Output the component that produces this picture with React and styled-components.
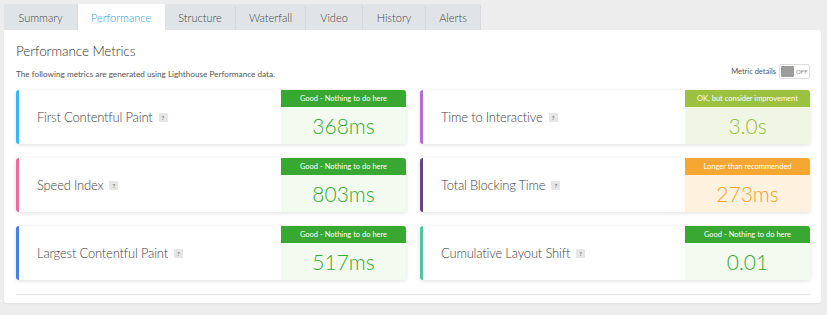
import React from 'react';
import styled, { createGlobalStyle } from 'styled-components';

const GlobalStyle = createGlobalStyle`
  body {
    margin: 0;
    background: #ededed;
    font-family: Lato, 'Open Sans', 'Liberation Sans', sans-serif;
  }
`;

const tabs = [
  { label: 'Summary', width: 74 },
  { label: 'Performance', width: 87 },
  { label: 'Structure', width: 71 },
  { label: 'Waterfall', width: 70 },
  { label: 'Video', width: 57 },
  { label: 'History', width: 63 },
  { label: 'Alerts', width: 55 },
];

const grades = {
  good: { head: '#38a832', body: '#f3faf0', text: '#36a830', label: 'Good - Nothing to do here' },
  ok: { head: '#9cc03f', body: '#f1f5e4', text: '#92bd38', label: 'OK, but consider improvement' },
  bad: { head: '#f5a732', body: '#fef1dd', text: '#f4a12a', label: 'Longer than recommended' },
};

const metrics = [
  { name: 'First Contentful Paint', value: '368ms', grade: 'good', accent: '#3bb9ef' },
  { name: 'Time to Interactive', value: '3.0s', grade: 'ok', accent: '#b26ed3' },
  { name: 'Speed Index', value: '803ms', grade: 'good', accent: '#f06a9f' },
  { name: 'Total Blocking Time', value: '273ms', grade: 'bad', accent: '#6e4280' },
  { name: 'Largest Contentful Paint', value: '517ms', grade: 'good', accent: '#4a80de' },
  { name: 'Cumulative Layout Shift', value: '0.01', grade: 'good', accent: '#4ec4a0' },
];

function App() {
  return (
    <Page>
      <GlobalStyle />
      <Tabs>
        {tabs.map((t) => (
          <Tab key={t.label} w={t.width} active={t.label === 'Performance'}>{t.label}</Tab>
        ))}
      </Tabs>
      <Panel>
        <Title>Performance Metrics</Title>
        <SubRow>
          <Subtitle>The following metrics are generated using Lighthouse Performance data.</Subtitle>
          <Toggle>
            Metric details
            <Switch>
              <Knob />
              <SwitchText>OFF</SwitchText>
            </Switch>
          </Toggle>
        </SubRow>
        <Grid>
          {metrics.map((m) => {
            const g = grades[m.grade];
            return (
              <Card key={m.name} accent={m.accent}>
                <Name>
                  {m.name}
                  <Help>?</Help>
                </Name>
                <Badge>
                  <BadgeHead bg={g.head}>{g.label}</BadgeHead>
                  <BadgeValue bg={g.body} color={g.text}>{m.value}</BadgeValue>
                </Badge>
              </Card>
            );
          })}
        </Grid>
        <Divider />
      </Panel>
    </Page>
  );
}

const Page = styled.div`
  padding: 4px 6px 0 4px;
  height: 315px;
  box-sizing: border-box;
`;

const Tabs = styled.div`
  display: flex;
  height: 26px;
`;

const Tab = styled.div`
  width: ${(p) => p.w}px;
  box-sizing: border-box;
  display: flex;
  align-items: center;
  justify-content: center;
  font-size: 11px;
  font-weight: 300;
  color: ${(p) => (p.active ? '#2b9edb' : '#444')};
  background: ${(p) => (p.active ? '#ffffff' : '#e0e4e7')};
  border-right: 1px solid ${(p) => (p.active ? '#ffffff' : '#d6dade')};
  border-radius: 2px 2px 0 0;
`;

const Panel = styled.div`
  background: #fff;
  padding: 13px 11px 8px 12px;
  border-radius: 0 3px 3px 3px;
  box-shadow: 0 1px 2px rgba(0, 0, 0, 0.06);
`;

const Title = styled.div`
  font-size: 13.5px;
  font-weight: 300;
  letter-spacing: -0.1px;
  color: #333;
  line-height: 16px;
`;

const SubRow = styled.div`
  display: flex;
  justify-content: space-between;
  align-items: center;
  margin-top: 5px;
  margin-bottom: 11px;
`;

const Subtitle = styled.div`
  font-size: 8.2px;
  color: #555;
  margin-top: 4px;
`;

const Toggle = styled.div`
  display: flex;
  align-items: center;
  gap: 3px;
  font-size: 7.5px;
  color: #555;
`;

const Switch = styled.div`
  display: flex;
  align-items: center;
  gap: 2px;
  width: 31px;
  height: 15px;
  box-sizing: border-box;
  border: 1px solid #ddd;
  border-radius: 2px;
  padding: 1px;
`;

const Knob = styled.div`
  width: 13px;
  height: 11px;
  background: #9c9c9c;
  border-radius: 1px;
`;

const SwitchText = styled.span`
  font-size: 6px;
  color: #888;
`;

const Grid = styled.div`
  display: grid;
  grid-template-columns: 390px 390px;
  column-gap: 14px;
  row-gap: 14px;
`;

const Card = styled.div`
  display: flex;
  height: 54px;
  background: #fff;
  border-left: 3px solid ${(p) => p.accent};
  border-radius: 3px;
  box-shadow: 0 1px 4px rgba(0, 0, 0, 0.13);
  overflow: hidden;
`;

const Name = styled.div`
  flex: 1;
  display: flex;
  align-items: center;
  padding-left: 18px;
  font-size: 13px;
  font-weight: 300;
  letter-spacing: -0.2px;
  color: #444;
`;

const Help = styled.span`
  display: inline-flex;
  align-items: center;
  justify-content: center;
  width: 9px;
  height: 9px;
  margin-left: 6px;
  background: #e6e6e6;
  color: #777;
  font-size: 6px;
  font-weight: 700;
  letter-spacing: 0;
  border-radius: 1px;
`;

const Badge = styled.div`
  width: 125px;
  display: flex;
  flex-direction: column;
`;

const BadgeHead = styled.div`
  height: 17px;
  display: flex;
  align-items: center;
  justify-content: center;
  background: ${(p) => p.bg};
  color: #fff;
  font-size: 7.5px;
`;

const BadgeValue = styled.div`
  flex: 1;
  display: flex;
  align-items: center;
  justify-content: center;
  background: ${(p) => p.bg};
  color: ${(p) => p.color};
  font-size: 21px;
  font-weight: 300;
`;

const Divider = styled.div`
  margin-top: 14px;
  border-top: 1px solid #e8e8e8;
`;

export default App;
